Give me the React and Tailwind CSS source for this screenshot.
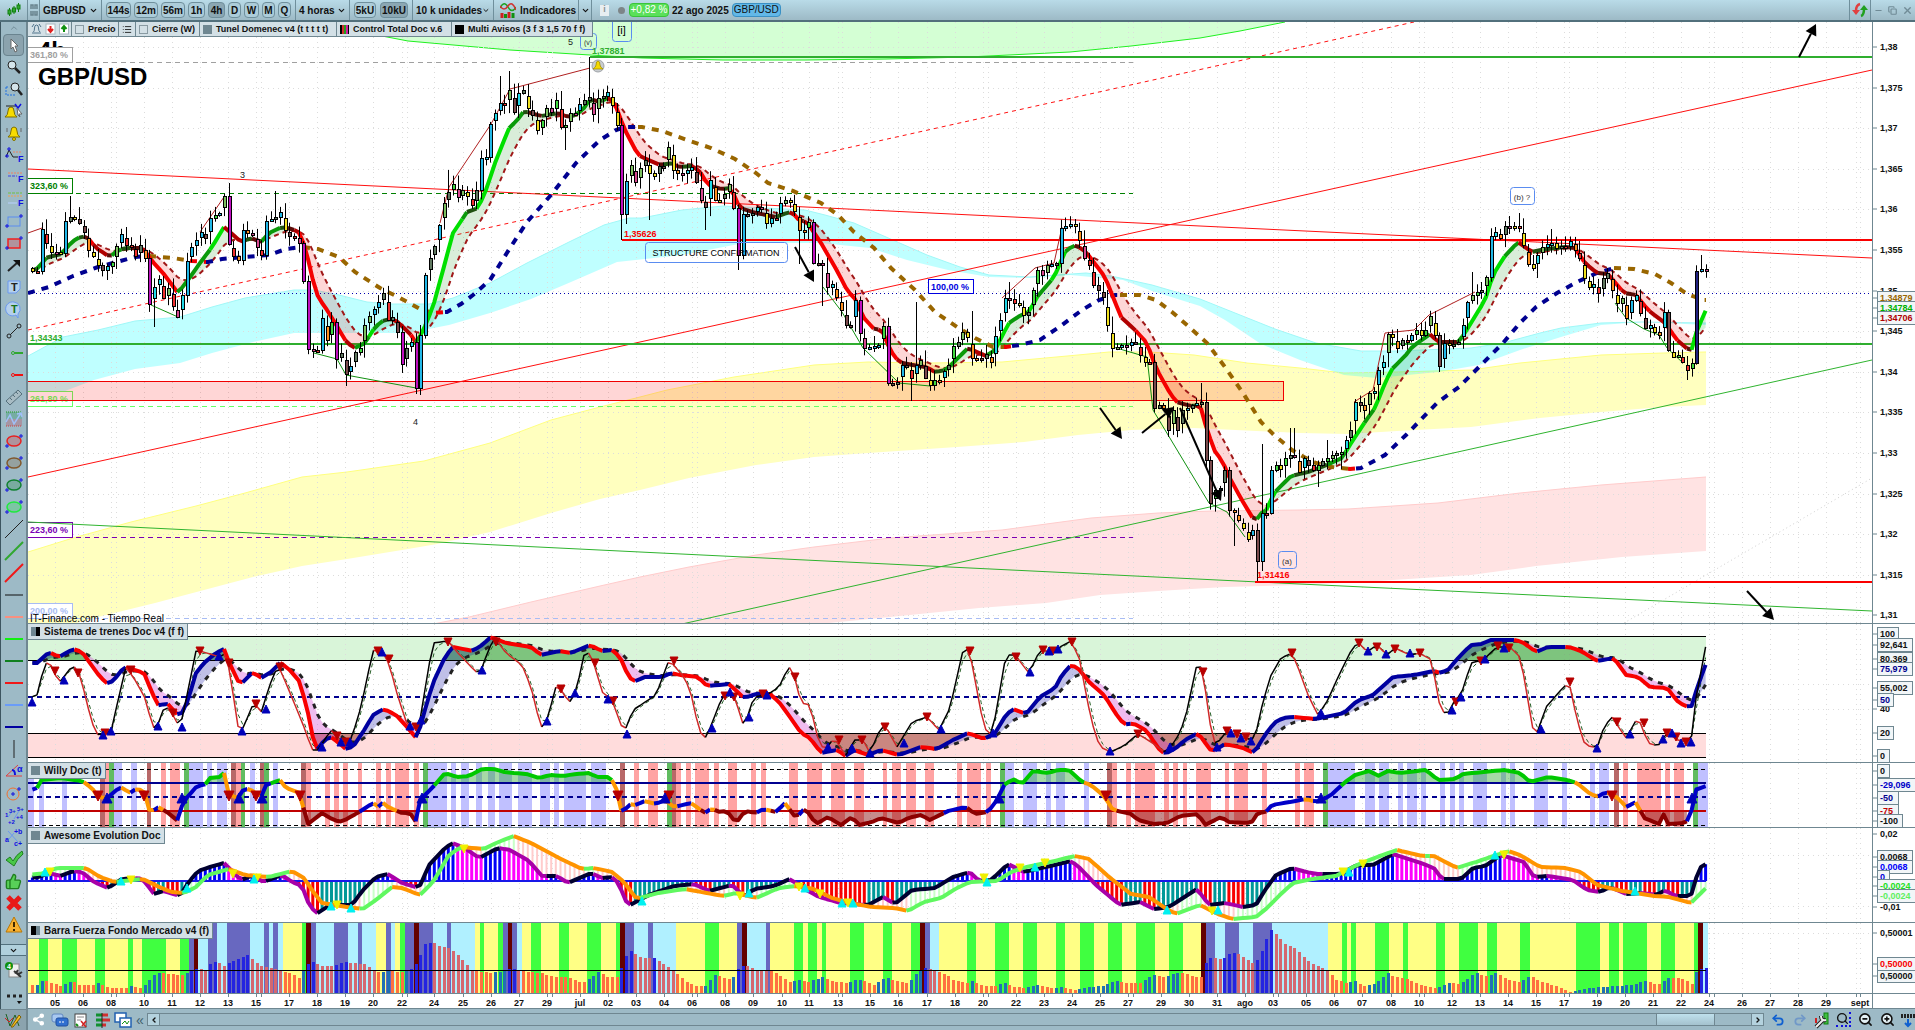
import { ChevronDown, ChevronLeft, ChevronRight, ChevronUp, List, Search, Share2, Undo2, Redo2, ZoomIn, ZoomOut, Check, ThumbsUp, Minus, Copy, X } from 'lucide-react'

// ---------- helpers ----------

const pts = s => s.trim().split(/\s+/).map(p => p.split(',').map(Number))

const STEP = 4.674
const BARS = Array.from({ length: 359 }, (_, i) => 32.35 + i * STEP)

function valueAt(series, x) {
  if (x <= series[0][0]) return series[0][1]
  for (let i = 1; i < series.length; i++) {
    const [x1, y1] = series[i]
    if (x <= x1) {
      const [x0, y0] = series[i - 1]
      return x1 === x0 ? y1 : y0 + ((y1 - y0) * (x - x0)) / (x1 - x0)
    }
  }
  return series[series.length - 1][1]
}

const sample = series => BARS.map(x => valueAt(series, x))

function ema(values, alpha) {
  let prev = values[0]
  return values.map(v => (prev = prev + alpha * (v - prev)))
}

function random(seed) {
  let s = seed
  return () => {
    s = (s * 16807) % 2147483647
    return s / 2147483647
  }
}

const f = n => Math.round(n * 10) / 10
const toPath = list => 'M' + list.map(([x, y]) => `${f(x)} ${f(y)}`).join('L')
const linePath = values => toPath(values.map((v, i) => [BARS[i], v]))

// Split a sampled line in runs of one colour
function runs(values, colorOf) {
  const out = []
  for (let i = 1; i < values.length; i++) {
    const color = colorOf(values[i] - values[i - 1], values[i], i)
    const last = out[out.length - 1]
    if (last && last.color === color) last.points.push([BARS[i], values[i]])
    else out.push({ color, points: [[BARS[i - 1], values[i - 1]], [BARS[i], values[i]]] })
  }
  return out
}

function between(a, b, test) {
  const out = []
  let top = []
  let bottom = []
  const flush = () => {
    if (top.length > 1) out.push(toPath([...top, ...bottom.reverse()]) + 'Z')
    top = []
    bottom = []
  }
  a.forEach((v, i) => {
    if (test(v, b[i])) {
      top.push([BARS[i], v])
      bottom.push([BARS[i], b[i]])
    } else flush()
  })
  flush()
  return out
}

// ---------- data ----------

const GRID_X = [55, 83, 111, 116, 144, 172, 200, 228, 256, 261, 289, 317, 345, 373, 402, 407, 434, 463, 491, 519, 547, 552, 580, 608, 636, 664, 692, 697, 725, 753, 782, 809, 838, 842, 870, 898, 927, 955, 983, 988, 1016, 1044, 1072, 1100, 1128, 1133, 1161, 1189, 1217, 1245, 1273, 1278, 1306, 1334, 1362, 1391, 1419, 1424, 1452, 1480, 1508, 1536, 1564, 1569, 1597, 1625, 1653, 1681, 1709, 1714, 1742, 1770, 1798, 1826, 1856, 1860]

const DATES = [[55, '05'], [83, '06'], [111, '08'], [144, '10'], [172, '11'], [200, '12'], [228, '13'], [256, '15'], [289, '17'], [317, '18'], [345, '19'], [373, '20'], [402, '22'], [434, '24'], [463, '25'], [491, '26'], [519, '27'], [547, '29'], [580, 'jul'], [608, '02'], [636, '03'], [664, '04'], [692, '06'], [725, '08'], [753, '09'], [782, '10'], [809, '11'], [838, '13'], [870, '15'], [898, '16'], [927, '17'], [955, '18'], [983, '20'], [1016, '22'], [1044, '23'], [1072, '24'], [1100, '25'], [1128, '27'], [1161, '29'], [1189, '30'], [1217, '31'], [1245, 'ago'], [1273, '03'], [1306, '05'], [1334, '06'], [1362, '07'], [1391, '08'], [1419, '10'], [1452, '12'], [1480, '13'], [1508, '14'], [1536, '15'], [1564, '17'], [1597, '19'], [1625, '20'], [1653, '21'], [1681, '22'], [1709, '24'], [1742, '26'], [1770, '27'], [1798, '28'], [1826, '29'], [1860, 'sept']]

const PRICES = ['1,38', '1,375', '1,37', '1,365', '1,36', '1,355', '1,35', '1,345', '1,34', '1,335', '1,33', '1,325', '1,32', '1,315', '1,31']

const AVG = sample(pts(`28,272 39,268 45,258 61,254 73,241 82,236 88,238 96,248 110,257 118,250 127,248 143,248 151,260 163,273 178,293 188,280 200,263 212,247 224,227 231,233 241,242 251,238 261,242 269,233 282,227 292,229 300,233 306,250 312,277 318,297 327,310 335,323 347,343 355,348 365,343 375,327 384,320 394,319 404,328 412,336 416,343 422,333 433,307 443,270 453,233 467,212 478,208 486,190 496,160 510,126 516,122 524,111 541,116 559,113 567,117 576,115 584,108 590,99 600,102 609,97 615,104 624,128 638,155 644,158 660,165 672,163 678,167 693,166 701,173 708,185 721,189 731,188 736,200 740,208 756,213 776,217 789,212 795,215 799,220 807,222 821,243 835,267 848,292 854,297 864,318 874,329 882,330 890,350 899,362 912,365 926,367 935,372 946,370 957,359 968,348 986,356 995,350 1001,338 1009,323 1021,315 1029,312 1037,297 1054,277 1066,250 1076,245 1086,252 1105,277 1113,297 1121,317 1135,330 1147,343 1156,368 1167,388 1176,402 1191,406 1200,405 1205,423 1214,450 1223,462 1227,473 1243,502 1255,522 1261,513 1265,513 1274,493 1291,476 1308,472 1324,466 1342,458 1353,440 1365,422 1375,408 1383,388 1391,370 1406,355 1412,347 1430,334 1438,342 1459,342 1471,323 1485,300 1493,275 1504,257 1518,242 1532,252 1546,249 1565,247 1575,248 1585,263 1597,273 1608,274 1624,293 1636,295 1648,310 1665,323 1677,340 1691,352 1697,330 1706,310`))
const AVG_SLOW = ema(AVG, 0.26)

const TREND = pts(`28,293 49,287 73,276 98,267 135,257 149,256 173,258 192,261 208,262 222,259 245,257 269,255 286,249 302,247 318,249 339,257 355,272 380,288 400,298 420,309 433,313 447,312 461,304 473,295 490,280 510,248 527,222 551,195 576,163 600,140 616,130 625,127 642,127 662,131 687,140 711,148 735,159 756,173 768,183 793,191 821,203 838,215 854,232 874,248 891,268 915,290 935,312 957,327 975,338 993,347 1006,347 1020,345 1040,340 1062,325 1082,310 1099,300 1115,295 1140,295 1156,300 1172,312 1188,326 1207,343 1225,367 1243,393 1261,422 1274,435 1292,450 1304,457 1316,463 1332,467 1350,469 1361,468 1385,455 1406,435 1438,402 1459,387 1483,363 1503,343 1520,323 1536,307 1557,293 1577,282 1597,273 1614,268 1634,269 1655,274 1671,283 1687,294 1704,300`)
const TREND_COLORS = [[28, 149, '#000090'], [149, 190, '#996600'], [190, 206, '#f00000'], [206, 303, '#000090'], [303, 436, '#996600'], [436, 445, '#f00000'], [445, 638, '#000090'], [638, 1004, '#996600'], [1004, 1012, '#f00000'], [1012, 1120, '#000090'], [1120, 1348, '#996600'], [1348, 1356, '#f00000'], [1356, 1614, '#000090'], [1614, 1706, '#996600']]

const BANDS = [
  {
    fill: '#ffe3e3', edge: '#ffcccc',
    upper: pts('433,624 469,617 531,602 600,586 640,577 689,567 756,555 814,547 890,538 1002,530 1091,518 1158,513 1212,511 1300,510 1348,509 1438,503 1520,493 1601,485 1706,477'),
    lower: pts('819,624 890,617 979,608 1046,603 1100,595 1158,591 1225,587 1300,585 1377,581 1471,575 1536,566 1622,557 1706,551'),
  },
  {
    fill: '#ffffbf', edge: '#ffff80',
    upper: pts('28,552 73,538 131,522 196,506 245,493 302,477 347,472 424,461 490,443 551,420 600,407 640,397 667,390 734,377 814,365 868,362 930,363 1002,362 1078,355 1109,352 1149,352 1194,355 1247,363 1300,368 1344,373 1397,372 1471,370 1520,363 1601,355 1663,353 1706,352'),
    lower: pts('28,624 73,624 98,617 155,603 204,590 253,577 302,566 347,559 408,549 437,544 490,532 551,513 600,499 640,490 689,478 756,465 814,457 868,453 957,447 1024,442 1078,435 1131,430 1194,428 1300,433 1348,434 1397,431 1471,427 1540,418 1601,412 1663,407 1706,405'),
  },
]
const CYAN = {
  upper: pts('28,356 63,337 98,330 135,321 180,317 212,307 245,298 294,290 314,290 339,295 367,302 392,304 429,304 453,298 490,283 527,263 567,243 604,225 629,218 642,218 682,210 723,206 764,208 805,210 825,215 854,223 886,237 927,255 960,267 989,275 1029,277 1086,273 1111,276 1152,285 1200,299 1275,329 1316,343 1361,351 1397,351 1471,348 1503,343 1540,333 1561,328 1601,323 1642,322 1706,323'),
  lower: pts('28,404 65,391 94,380 135,369 180,363 212,353 253,342 294,333 347,333 408,333 449,325 490,313 531,299 571,282 617,262 682,255 744,243 821,243 870,248 907,260 948,270 989,277 1029,278 1070,275 1123,280 1152,291 1200,306 1225,320 1261,344 1300,360 1344,375 1377,378 1438,372 1479,365 1520,350 1561,337 1601,325 1642,322 1706,325'),
}

const CLOSES = pts(`28,271 37,271 41,229 46,243 52,252 60,253 65,221 72,217 78,223 83,232 90,250 98,265 104,270 110,262 116,246 122,234 128,245 133,255 136,240 141,245 145,258 149,304 153,287 158,279 164,298 168,288 173,306 178,317 181,295 186,261 194,240 200,232 205,238 210,218 219,213 224,196 228,244 234,256 239,260 243,230 251,235 260,255 267,221 274,217 279,212 284,230 292,236 300,243 304,281 308,349 316,350 322,318 328,340 332,322 336,359 341,353 346,374 351,366 356,352 361,348 365,325 372,309 376,302 380,317 384,293 388,320 392,317 396,332 402,364 407,348 412,342 416,388 420,335 425,275 430,258 436,246 440,225 444,203 449,192 453,184 458,197 463,190 468,196 473,205 478,190 482,158 487,157 491,124 496,113 501,103 506,104 510,90 515,112 519,93 524,90 528,108 533,115 538,130 543,120 548,108 553,112 557,100 562,127 567,125 572,113 577,104 582,100 586,97 590,67 594,114 599,98 604,96 608,92 613,105 618,125 622,214 627,181 632,165 636,182 641,168 646,160 651,173 656,176 661,166 669,147 674,170 680,175 690,167 697,182 702,200 707,207 712,180 717,200 722,194 728,184 733,208 735,227 740,255 745,214 750,213 754,230 759,207 764,223 770,218 776,218 782,203 787,200 792,210 796,245 801,230 806,222 810,240 815,263 820,265 825,287 830,284 835,297 840,310 848,325 853,300 858,333 863,348 869,347 877,345 881,326 884,375 890,383 898,382 904,365 912,378 917,365 922,360 927,378 931,385 937,380 943,371 949,365 953,346 958,342 964,332 969,337 974,358 979,360 984,354 990,362 994,336 998,320 1003,298 1010,299 1016,303 1022,315 1026,312 1031,290 1036,270 1042,275 1048,265 1054,263 1058,243 1062,228 1068,224 1074,226 1078,240 1082,258 1088,265 1092,285 1098,290 1104,297 1109,325 1114,348 1120,345 1128,345 1133,342 1137,355 1142,355 1147,362 1152,408 1158,405 1163,408 1168,430 1173,410 1177,430 1182,410 1188,408 1193,405 1199,402 1203,460 1208,503 1214,490 1220,488 1223,470 1228,510 1232,512 1237,520 1242,528 1247,538 1252,530 1255,561 1259,484 1264,513 1270,470 1275,465 1280,469 1287,458 1292,455 1297,472 1303,458 1308,465 1312,470 1318,465 1325,458 1332,455 1340,452 1345,440 1349,430 1353,402 1360,405 1364,410 1368,393 1373,391 1377,370 1382,362 1386,334 1391,337 1396,347 1402,340 1408,340 1415,330 1421,335 1424,330 1429,316 1433,335 1438,366 1443,343 1450,345 1457,342 1462,325 1466,302 1471,295 1476,292 1481,290 1485,277 1490,236 1495,232 1500,238 1504,226 1512,226 1518,226 1523,245 1528,264 1532,268 1537,255 1542,247 1548,244 1553,243 1558,248 1563,246 1568,241 1573,250 1579,258 1584,278 1588,287 1593,284 1598,293 1603,278 1608,273 1612,290 1617,303 1622,298 1626,318 1631,300 1635,295 1640,313 1645,328 1650,325 1655,332 1659,335 1663,312 1667,350 1673,357 1678,355 1683,362 1687,370 1692,363 1697,271 1702,269 1706,270`)

// x, high, low of the bars with a long shadow
const WICKS = [[70, 196, 0], [228, 183, 0], [275, 191, 0], [153, 0, 327], [312, 0, 358], [347, 0, 386], [416, 0, 394], [421, 0, 395], [449, 170, 0], [502, 76, 0], [510, 71, 0], [567, 0, 150], [590, 57, 0], [622, 0, 240], [650, 0, 220], [707, 0, 230], [740, 0, 270], [797, 0, 264], [823, 0, 306], [913, 0, 401], [918, 302, 0], [970, 311, 0], [1007, 282, 0], [1073, 219, 0], [1199, 383, 0], [1232, 0, 546], [1255, 0, 581], [1260, 444, 0], [1292, 428, 0], [1325, 440, 0], [1317, 0, 487], [1343, 0, 469], [1438, 0, 372], [1471, 272, 0], [1509, 216, 0], [1518, 213, 0], [1551, 229, 0], [1688, 0, 380], [1700, 255, 0]]

const CANDLES = (() => {
  const rnd = random(77)
  const up = ['#22b8e8', '#40d840', '#607860', '#22d8e8', '#7cc060']
  const down = ['#f0e020', '#ff9020', '#d84890', '#7a4a4c', '#f03030']
  let prev = 268
  return BARS.map(x => {
    const near = CLOSES.find(p => Math.abs(p[0] - x) < 2.6)
    const close = near ? near[1] : valueAt(CLOSES, x)
    const open = prev
    prev = close
    let top = Math.min(open, close)
    let bottom = Math.max(open, close)
    const long = WICKS.find(w => Math.abs(w[0] - x) <= 2.4)
    const high = long && long[1] ? long[1] : top - 1 - rnd() * 9
    const low = long && long[2] ? long[2] : bottom + 1 + rnd() * 9
    const size = bottom - top
    let fill = (close < open ? up : down)[Math.floor(rnd() * 5)]
    if (size > 28) fill = close < open ? (x > 1690 ? '#202080' : '#22b8e8') : x < 900 ? '#c010c0' : '#7a4a4c'
    else if (size > 5) {
      // ordinary bars open with a gap against the last close
      if (close < open) bottom -= size * 0.35
      else top += size * 0.35
    }
    return { x: Math.round(x) + 0.5, top, bottom, fill, high, low }
  })
})()

const TRAIN = sample(pts(`28,663 37,663 49,652 59,657 73,649 82,652 90,663 100,677 108,684 114,680 124,667 135,670 144,673 153,695 159,706 167,703 175,712 180,717 188,700 196,673 204,663 216,653 224,649 228,660 240,685 253,672 261,678 271,672 280,663 288,668 300,682 308,713 314,743 318,750 324,740 331,737 339,743 347,750 355,744 363,732 373,715 384,709 396,715 408,728 417,739 424,713 433,683 445,657 453,647 473,651 482,645 491,637 506,643 531,647 541,655 559,651 571,653 590,645 602,651 612,650 620,657 627,673 633,682 645,677 662,677 671,673 680,675 698,677 707,686 718,685 729,684 744,698 756,694 770,694 779,702 790,717 801,733 810,738 821,753 837,750 846,756 854,750 868,755 881,750 899,755 921,747 937,749 953,740 968,733 984,739 995,733 1006,715 1013,709 1026,714 1040,697 1055,688 1062,675 1071,665 1078,668 1089,682 1104,695 1120,720 1127,725 1133,723 1147,731 1158,748 1165,754 1176,748 1185,740 1198,733 1212,752 1225,744 1243,748 1254,753 1265,735 1274,723 1283,718 1293,717 1316,719 1344,713 1357,701 1373,695 1393,677 1414,675 1434,671 1440,673 1448,670 1459,657 1471,645 1481,644 1491,640 1516,640 1524,643 1536,652 1548,647 1569,647 1581,651 1597,661 1614,658 1626,675 1638,677 1650,687 1667,688 1679,703 1691,708 1698,685 1706,664`))
const TRAIN_SLOW = ema(TRAIN, 0.27)

const FAST = sample(pts(`28,698 37,695 45,663 50,663 59,683 73,665 80,675 92,723 98,735 107,733 112,728 118,700 126,667 135,680 145,698 153,728 157,727 164,708 169,708 180,728 186,700 196,651 200,651 220,657 226,653 231,680 239,733 243,728 254,702 261,713 269,687 278,665 286,683 304,727 312,750 318,750 331,730 341,742 351,740 361,707 373,650 384,653 390,667 398,697 408,727 416,728 420,720 427,677 433,643 448,641 457,652 476,672 482,670 488,650 495,638 506,653 522,665 531,687 541,728 547,720 557,683 569,703 576,692 584,655 589,653 594,663 602,692 612,700 624,733 633,710 656,695 669,660 685,678 694,703 698,730 706,738 712,723 723,695 734,695 744,727 754,697 767,695 779,687 788,668 792,667 801,703 810,705 819,743 825,750 834,738 846,756 854,740 863,740 870,753 881,727 886,727 897,747 912,722 927,717 939,730 950,708 964,646 970,653 984,728 992,735 997,707 1006,655 1015,655 1029,673 1040,650 1055,652 1060,647 1071,641 1080,660 1087,700 1096,738 1102,748 1111,752 1125,745 1138,734 1154,744 1165,753 1176,740 1185,720 1198,659 1203,673 1212,737 1216,745 1227,731 1236,735 1250,740 1255,738 1261,710 1270,677 1281,658 1292,653 1299,670 1308,695 1318,715 1328,700 1338,677 1353,647 1359,643 1367,652 1377,645 1387,655 1395,648 1410,655 1419,653 1432,660 1438,700 1446,717 1455,700 1461,695 1471,663 1483,660 1497,647 1510,647 1520,657 1526,687 1532,727 1537,733 1546,707 1561,690 1569,682 1577,720 1585,745 1597,748 1604,727 1612,717 1626,738 1638,717 1648,743 1658,746 1667,732 1677,740 1691,742 1695,703 1706,645`))
const FAST_SLOW = ema(FAST, 0.7)

const TRAIN_SELL = pts('55,671 78,673 105,733 131,670 173,713 200,651 229,663 256,704 280,667 337,736 346,742 378,651 389,659 416,727 448,642 496,642 561,689 595,663 613,701 674,661 725,696 734,697 763,694 795,677 839,740 862,740 885,727 927,717 970,651 1016,657 1043,650 1053,651 1072,642 1138,734 1203,672 1227,731 1237,734 1246,737 1292,653 1359,643 1377,647 1395,649 1420,653 1456,702 1481,661 1498,646 1509,648 1570,682 1617,722 1644,723 1667,733 1676,737 1686,742')
const TRAIN_BUY = pts('32,702 64,680 103,735 111,731 158,726 182,727 219,656 242,731 266,709 322,747 341,742 350,742 382,652 410,726 421,720 482,670 547,721 575,693 608,699 627,734 712,728 730,692 749,717 767,695 828,747 852,748 870,753 904,743 941,729 993,733 1030,672 1049,651 1058,649 1110,751 1170,747 1217,747 1231,733 1241,738 1251,741 1321,713 1368,651 1386,654 1410,653 1452,710 1461,697 1485,659 1504,648 1541,729 1597,748 1630,734 1663,739 1672,733 1681,743 1691,742')

const WILLY = sample(pts(`28,791 37,788 40,780 61,778 82,781 92,788 98,797 107,798 120,787 131,793 137,788 145,793 150,813 158,807 167,812 178,821 183,802 198,785 204,786 210,778 220,777 224,773 229,795 239,798 244,788 251,790 261,797 266,785 280,780 286,788 300,793 304,810 308,824 322,813 330,818 339,822 345,820 359,812 373,803 378,807 382,802 388,807 402,813 410,813 416,822 420,800 433,787 445,773 457,777 469,776 482,769 494,769 504,772 514,773 527,774 539,778 550,775 563,776 576,774 590,773 596,777 610,777 616,787 622,814 629,804 636,805 645,801 656,804 665,800 674,807 691,803 705,813 712,808 718,812 727,811 736,823 745,811 756,813 763,809 776,812 785,803 796,818 805,808 816,824 828,817 841,825 852,817 859,825 872,822 881,818 899,823 908,818 921,815 930,820 948,811 966,807 975,814 988,812 997,800 1004,785 1013,779 1022,784 1033,771 1048,773 1058,770 1069,770 1082,782 1091,785 1104,796 1113,810 1131,814 1138,820 1154,824 1167,823 1180,816 1198,814 1205,825 1221,817 1229,822 1247,823 1254,821 1258,812 1265,813 1272,805 1290,802 1306,799 1316,802 1330,796 1344,783 1355,775 1369,771 1379,776 1387,771 1400,773 1426,770 1438,780 1455,779 1463,774 1504,770 1520,773 1530,782 1548,777 1567,780 1577,783 1589,793 1597,797 1606,792 1618,798 1626,807 1636,802 1644,818 1659,824 1663,813 1668,824 1683,823 1690,820 1695,790 1706,786`))
const WILLY_ZONES = {
  b: [[28, 34], [39, 44], [62, 67], [114, 122], [131, 137], [189, 203], [207, 212], [217, 227], [250, 255], [273, 278], [428, 447], [451, 456], [461, 469], [476, 482], [488, 495], [499, 512], [518, 532], [540, 550], [554, 559], [564, 586], [591, 606], [1005, 1014], [1023, 1037], [1046, 1051], [1056, 1065], [1084, 1089], [1328, 1355], [1365, 1375], [1379, 1389], [1398, 1403], [1407, 1417], [1421, 1426], [1440, 1445], [1450, 1455], [1459, 1464], [1473, 1487], [1501, 1506], [1510, 1515], [1534, 1548], [1562, 1567], [1590, 1595], [1599, 1609], [1698, 1708]],
  r: [[105, 109], [161, 166], [170, 180], [236, 241], [306, 311], [325, 330], [334, 339], [343, 348], [358, 362], [376, 381], [386, 391], [395, 409], [414, 419], [634, 639], [648, 658], [676, 681], [686, 691], [695, 709], [714, 719], [728, 737], [751, 756], [761, 766], [789, 798], [807, 822], [831, 845], [854, 864], [883, 887], [892, 901], [906, 916], [925, 934], [957, 962], [967, 981], [986, 991], [1112, 1117], [1126, 1131], [1135, 1155], [1164, 1169], [1173, 1178], [1183, 1187], [1196, 1211], [1225, 1229], [1234, 1248], [1262, 1267], [1295, 1300], [1304, 1314], [1623, 1628], [1637, 1661], [1665, 1670], [1674, 1684]],
  g: [[109, 114], [184, 189], [241, 245], [264, 269], [423, 428], [667, 672], [1000, 1005], [1323, 1328], [1693, 1698]],
  d: [[100, 105], [147, 151], [231, 236], [260, 264], [301, 306], [620, 625], [672, 676], [1107, 1112], [1614, 1619]],
}
const ZONE_FILL = { b: '#c0c0ff', r: '#ffa3a3', g: '#60bc60', d: '#b86868' }

const AO = sample(pts(`28,878 39,877 49,873 60,876 73,871 82,872 94,882 108,888 122,879 139,878 145,882 154,894 163,891 180,896 188,883 198,871 210,867 224,863 231,870 241,880 253,875 263,882 282,875 292,882 302,886 308,902 316,914 327,907 335,905 352,905 363,890 376,877 388,874 402,883 419,888 429,865 443,850 452,843 465,848 479,858 498,848 510,850 529,861 542,876 557,876 568,883 591,873 602,878 614,877 620,887 628,906 649,895 674,886 694,884 709,891 732,885 745,897 754,889 774,886 790,879 803,888 819,897 841,903 868,905 883,897 895,904 912,890 935,888 953,877 970,872 979,881 991,880 1008,864 1024,872 1046,867 1071,861 1080,868 1096,885 1120,905 1140,902 1154,909 1169,907 1197,889 1209,905 1225,903 1243,907 1256,905 1265,890 1276,875 1292,868 1306,872 1318,874 1340,874 1357,865 1373,865 1393,854 1418,862 1434,868 1442,879 1461,879 1473,868 1485,866 1501,855 1524,862 1534,877 1548,876 1573,880 1587,890 1600,892 1610,887 1626,894 1642,893 1657,895 1665,890 1675,896 1691,896 1699,868 1706,864`))
const AO_SIGNAL = sample(pts(`28,875 45,873 57,868 86,868 100,877 114,882 143,879 155,885 171,892 184,893 196,887 208,875 229,869 245,875 269,877 292,871 304,878 314,893 322,903 347,907 363,909 376,900 392,887 402,888 420,895 433,882 449,855 461,847 484,849 496,843 514,836 531,843 559,858 582,869 594,868 612,872 624,882 635,897 640,898 658,893 685,889 707,893 723,896 736,893 756,898 779,888 796,886 814,889 832,898 850,903 872,907 895,908 908,911 924,902 941,898 957,888 970,882 997,881 1011,872 1026,867 1046,863 1075,856 1089,859 1109,877 1131,894 1149,897 1165,908 1176,914 1200,905 1218,914 1232,919 1256,917 1267,908 1283,892 1293,883 1312,879 1336,876 1357,865 1377,857 1397,850 1422,856 1434,856 1457,868 1479,861 1508,851 1520,855 1540,867 1565,868 1581,872 1597,885 1622,891 1655,896 1669,897 1691,903 1706,888`))
const AO_DOWN = pts('50,872 131,880 233,874 257,878 337,905 464,849 740,896 799,887 820,894 848,903 984,878 1020,868 1045,863 1212,911 1343,872 1363,864 1504,855')
const AO_UP = pts('45,872 121,881 187,888 254,879 331,906 351,908 642,901 749,893 805,888 842,903 853,903 987,882 1035,867 1167,910 1218,910 1349,872 1495,855 1635,891')

const FORCE_BG = `28y 39g 48y 62g 77y 95g 105y 128g 133y 142g 166y 180g 189p 194m 198c 208p 217c 227p 250c 264p 269c 273p 278c 283y 302g 306m 311p 316c 334p 348c 358p 362c 376y 386p 391c 395y 400g 405p 414m 419p 433c 447p 451c 475y 480g 484y 498g 503p 508m 512p 517c 522y 531g 541y 559g 569y 587g 601y 616g 620m 625p 634c 648p 653c 676y 705g 719y 737p 742m 747c 766p 770y 794g 803y 808g 817y 822g 826y 850g 864y 883g 892y 911g 920m 925p 930c 939y 967g 976y 995g 1009y 1023g 1037y 1056g 1065y 1080g 1094y 1108g 1122y 1136g 1155y 1169g 1183y 1201m 1206p 1215c 1225p 1239c 1253p 1272c 1328y 1342g 1347y 1351g 1356y 1375g 1389y 1403g 1408y 1436g 1445y 1459g 1478y 1487g 1497y 1520g 1530y 1576g 1600y 1609g 1619y 1623g 1647y 1661g 1675y 1694g 1698m 1703c 1708e`
  .split(' ').map(s => [parseInt(s, 10), s.slice(-1)])
const FORCE_FILL = { y: '#ffff85', g: '#40ff40', c: '#b0f0ff', p: '#6868c0', m: '#640000' }
const FORCE = sample(pts(`31,985 36,986 40,981 46,981 52,983 60,986 66,984 72,981 80,985 95,985 98,983 105,986 112,988 126,988 132,986 140,988 147,984 152,976 160,972 170,974 183,975 192,970 197,969 206,970 210,964 216,962 225,966 232,961 240,958 248,955 255,962 262,966 270,968 280,970 292,974 300,979 306,965 313,962 322,966 334,966 342,962 365,964 376,972 390,971 400,972 410,970 418,962 424,944 432,942 440,947 450,948 460,957 472,970 490,973 503,971 512,968 520,971 540,973 555,977 567,977 583,983 590,978 598,972 608,977 618,977 624,960 629,951 633,952 640,957 647,959 653,957 662,963 673,970 685,981 695,986 705,986 715,975 725,978 732,980 740,966 748,966 757,970 770,970 778,975 792,983 797,979 808,982 822,977 832,981 846,983 858,979 864,981 875,985 885,977 895,981 908,983 918,972 925,968 934,970 945,974 955,981 968,983 972,981 985,986 995,986 1004,983 1015,987 1025,988 1037,985 1050,988 1062,987 1075,990 1090,987 1102,986 1115,981 1128,983 1140,983 1152,975 1165,977 1180,972 1195,977 1201,977 1206,962 1211,957 1222,960 1232,952 1240,955 1252,963 1257,960 1262,950 1267,937 1270,929 1276,934 1285,944 1295,948 1307,960 1317,966 1328,970 1335,979 1345,983 1354,981 1365,986 1375,984 1388,973 1395,977 1408,979 1420,985 1435,988 1450,983 1460,984 1475,973 1487,976 1495,973 1510,980 1520,982 1530,976 1540,981 1555,986 1570,992 1585,989 1600,987 1615,986 1630,985 1645,981 1658,985 1668,978 1680,978 1692,984 1696,972 1702,968 1706,968`))

// ---------- chart parts ----------

function Chart({ top, height, children, label }) {
  return (
    <svg viewBox={`28 ${top} 1887 ${height}`} className="block w-full" role="img" aria-label={label} fontFamily="Liberation Sans, Arial, sans-serif">
      {children}
      <line x1="1872.5" x2="1872.5" y1={top} y2={top + height} stroke="#6f8791" />
      <line x1="28" x2="1915" y1={top + height - 0.5} y2={top + height - 0.5} stroke="#6f8791" />
    </svg>
  )
}

function Grid({ top, bottom, rows = [] }) {
  return (
    <g stroke="#dcdcdc" strokeDasharray="1 4">
      {GRID_X.map(x => <line key={x} x1={x + 0.5} x2={x + 0.5} y1={top} y2={bottom} />)}
      {rows.map(y => <line key={y} x1="28" x2="1872" y1={y + 0.5} y2={y + 0.5} />)}
    </g>
  )
}

function AxisLabel({ y, text, color = '#111', boxed = false }) {
  const w = Math.round(text.length * 4.6 + 7)
  return (
    <g>
      <line x1="1872" x2="1877" y1={y} y2={y} stroke="#6f8791" />
      {boxed && <rect x="1877.5" y={Math.round(y) - 6.5} width={w} height="13" fill="#f2f6f8" stroke="#6f8791" />}
      <text x="1880" y={y + 3} fontSize="9" fontWeight="bold" fill={color}>{text}</text>
    </g>
  )
}

function Tri({ x, y, up, r = 4, fill }) {
  const d = up ? `M${x - r} ${y + r}L${x} ${y - r}L${x + r} ${y + r}Z` : `M${x - r} ${y - r}L${x} ${y + r}L${x + r} ${y - r}Z`
  return <path d={d} fill={fill} stroke={fill} />
}

function Arrow({ x1, y1, x2, y2 }) {
  const a = Math.atan2(y2 - y1, x2 - x1)
  const bx = x2 - 11 * Math.cos(a)
  const by = y2 - 11 * Math.sin(a)
  const ox = 6 * Math.sin(a)
  const oy = 6 * Math.cos(a)
  return (
    <g>
      <line x1={x1} y1={y1} x2={bx} y2={by} stroke="#000" strokeWidth="2" />
      <path d={`M${x2} ${y2}L${bx + ox} ${by - oy}L${bx - ox} ${by + oy}Z`} />
    </g>
  )
}

function Runs({ items, width, dash }) {
  return items.map((r, i) => (
    <path key={i} d={toPath(r.points)} fill="none" stroke={r.color} strokeWidth={width} strokeDasharray={dash} strokeLinejoin="round" />
  ))
}

function Note({ x, y, w, h, text, size = 9, color = '#333' }) {
  return (
    <g>
      <rect x={x + 0.5} y={y + 0.5} width={w} height={h} rx="3" fill="none" stroke="#5a8cf0" />
      <text x={x + w / 2} y={y + h / 2 + 4} fontSize={size} fill={color} textAnchor="middle">{text}</text>
    </g>
  )
}

const FIBS = [
  [62, '361,80 %', '#a0a0a0'],
  [193, '323,60 %', '#008000'],
  [406, '261,80 %', '#66ff66'],
  [537, '223,60 %', '#7a00b4'],
  [618, '200,00 %', '#a8bcf4'],
]

function avgColor(d) {
  if (d < -7) return '#00e000'
  if (d < -2) return '#0a9a0a'
  if (d < 0) return '#1f5210'
  if (d < 2) return '#5a0c08'
  if (d < 5) return '#b00000'
  return '#f40000'
}

function PriceChart() {
  return (
    <Chart top={22} height={602} label="GBP/USD 4 horas">
      <rect x="28" y="22" width="1887" height="602" fill="#fff" />
      <path d="M340 22L382 36L408 41L510 50L590 55L642 58L723 60L805 60L886 59L968 57L1070 52L1131 46L1200 38L1240 31L1285 22Z" fill="#d4ffd4" />
      <path d="M340 22L382 36L408 41L510 50L590 55L642 58L723 60L805 60L886 59L968 57L1070 52L1131 46L1200 38L1240 31L1285 22" fill="none" stroke="#20f020" />
      {BANDS.map(b => (
        <g key={b.fill}>
          <path d={toPath([...b.upper, ...[...b.lower].reverse()]) + 'Z'} fill={b.fill} />
          <path d={toPath(b.upper)} fill="none" stroke={b.edge} />
        </g>
      ))}
      <path d={toPath([...CYAN.upper, ...[...CYAN.lower].reverse()]) + 'Z'} fill="#00ffff" fillOpacity="0.25" />
      <path d={toPath(CYAN.upper)} fill="none" stroke="#a0f8f8" />
      <Grid top={22} bottom={624} rows={PRICES.map((_, i) => Math.round(47 + i * 40.6))} />

      <text x="38" y="59" fontSize="24" fontWeight="bold">4h</text>
      <text x="38" y="85" fontSize="24" fontWeight="bold">GBP/USD</text>
      {FIBS.map(([y, text, color]) => (
        <g key={text}>
          <line x1="76" x2="1133" y1={y + 0.5} y2={y + 0.5} stroke={color} strokeDasharray="5 4" />
          <rect x="20.5" y={y - 14.5} width="52" height="15" fill="#fff" stroke={color} />
          <text x="30" y={y - 4} fontSize="9" fontWeight="bold" fill={color}>{text}</text>
        </g>
      ))}

      {/* support zone */}
      <rect x="20" y="381.5" width="1263.5" height="19" fill="#ff0000" fillOpacity="0.16" stroke="#f00000" />

      {/* trend lines */}
      <g fill="none" stroke="#ff1010">
        <path d="M28 169L640 199L1200 226L1872 258" />
        <path d="M28 330L640 194L1414 22" strokeDasharray="4 4" />
        <path d="M28 477L640 342L1200 218L1872 70" />
      </g>
      <g fill="none" stroke="#2fb42f">
        <path d="M28 522L640 552L1300 584L1872 611" />
        <path d="M682 624L1300 487L1872 360" />
      </g>
      <path d="M1624 623L1872 478" stroke="#d0d0d0" strokeDasharray="1 3" />
      <line x1="28" x2="1872" y1="293.5" y2="293.5" stroke="#0000b0" strokeDasharray="1 3" />
      <line x1="590" x2="1872" y1="57" y2="57" stroke="#2fae2f" strokeWidth="2" />
      <line x1="28" x2="1872" y1="344" y2="344" stroke="#2fae2f" strokeWidth="2" />
      <line x1="622" x2="1872" y1="240" y2="240" stroke="#fa0000" strokeWidth="2" />
      <line x1="1255" x2="1872" y1="582" y2="582" stroke="#fa0000" strokeWidth="2" />

      {between(AVG, AVG_SLOW, (a, b) => a <= b).map(d => <path key={d} d={d} fill="#008800" fillOpacity="0.15" />)}
      {between(AVG, AVG_SLOW, (a, b) => a > b).map(d => <path key={d} d={d} fill="#f00000" fillOpacity="0.16" />)}
      <path d={linePath(AVG_SLOW)} fill="none" stroke="#a01818" strokeWidth="2" strokeDasharray="5 4" />
      {TREND_COLORS.map(([from, to, color]) => {
        const inner = TREND.filter(p => p[0] > from && p[0] < to)
        const d = toPath([[from, valueAt(TREND, from)], ...inner, [to, valueAt(TREND, to)]])
        return <path key={from} d={d} fill="none" stroke={color} strokeWidth="4" strokeDasharray="7 7" />
      })}

      {/* zigzags */}
      <path d="M28 233L42 228M200 232L224 197M440 223L449 187L491 124L510 89L590 68M1002 298L1035 268L1054 263L1062 227M1354 402L1373 390L1385 333L1414 330L1429 315L1475 292" fill="none" stroke="#b02020" />
      <path d="M151 305L178 317M314 353L337 359L346 375L416 388M823 287L842 312L863 348L899 383L930 386M1113 347L1147 357L1153 410L1209 503L1227 512L1245 537M1615 303L1626 318L1644 329L1659 335L1667 348L1683 363" fill="none" stroke="#109010" />

      <Runs items={runs(AVG, avgColor)} width={4} />

      {CANDLES.map(c => (
        <g key={c.x}>
          <line x1={c.x} x2={c.x} y1={f(c.high)} y2={f(c.low)} stroke="#000" />
          <rect x={c.x - 1} y={Math.round(c.top) + 0.5} width="3" height={Math.max(2, Math.round(c.bottom - c.top))} fill={c.fill} stroke="#000" />
        </g>
      ))}

      <Arrow x1={1799} y1={57} x2={1816} y2={24} />
      <Arrow x1={1747} y1={591} x2={1774} y2={620} />
      <Arrow x1={795} y1={247} x2={814} y2={282} />
      <Arrow x1={1100} y1={408} x2={1122} y2={439} />
      <Arrow x1={1142} y1={433} x2={1174} y2={407} />
      <Arrow x1={1180} y1={408} x2={1221} y2={501} />

      <Note x={645} y={242} w={142} h={20} text="STRUCTURE CONFIRMATION" color="#000" />
      <Note x={612} y={18} w={19} h={23} text="[i]" size={11} color="#000" />
      <Note x={580} y={33} w={16} h={16} text="(v)" size={7} />
      <Note x={1510} y={187} w={24} h={17} text="(b) ?" size={8} />
      <Note x={1278} y={551} w={18} h={17} text="(a)" size={8} />
      <rect x="928.5" y="279.5" width="45" height="14" fill="#fff" stroke="#0000e0" />
      <text x="931" y="290" fontSize="9" fontWeight="bold" fill="#0000e0">100,00 %</text>
      <g fontSize="9" fill="#222">
        <text x="240" y="178">3</text>
        <text x="413" y="425">4</text>
        <text x="568" y="45">5</text>
      </g>
      <g fontSize="9" fontWeight="bold">
        <text x="592" y="54" fill="#2fae2f">1,37881</text>
        <text x="30" y="341" fill="#2fae2f">1,34343</text>
        <text x="624" y="237" fill="#fa0000">1,35626</text>
        <text x="1257" y="578" fill="#fa0000">1,31416</text>
      </g>
      <circle cx="598" cy="66" r="6" fill="#c8ccd0" stroke="#a0a4a8" />
      <path d="M593 69Q596 67 596 65Q596 61 598 61Q600 61 600 65Q600 67 603 69Z" fill="#f4d800" stroke="#9a8400" strokeWidth="0.7" />
      <text x="30" y="622" fontSize="10" fill="#000">IT-Finance.com - Tiempo Real</text>

      <rect x="1873" y="22" width="42" height="602" fill="#fff" />
      {PRICES.map((p, i) => <AxisLabel key={p} y={Math.round(47 + i * 40.6)} text={p} />)}
      <AxisLabel y={298} text="1,34879" color="#996600" boxed />
      <AxisLabel y={308} text="1,34784" color="#00b000" boxed />
      <AxisLabel y={318} text="1,34706" color="#b00000" boxed />
    </Chart>
  )
}

function TrainChart() {
  const high = TRAIN.map(v => Math.min(v, 660))
  const low = TRAIN.map(v => Math.max(v, 733))
  return (
    <Chart top={624} height={139} label="Sistema de trenes Doc v4">
      <rect x="28" y="624" width="1887" height="139" fill="#fff" />
      <rect x="28" y="636" width="1678" height="24" fill="#d9f5d9" />
      <rect x="28" y="733" width="1678" height="24" fill="#ffdcdc" />
      <Grid top={624} bottom={763} rows={[684, 709]} />
      {between(high, high.map(() => 660), (a, b) => a <= b).map(d => <path key={d} d={d} fill="#008000" fillOpacity="0.42" />)}
      {between(low, low.map(() => 733), (a, b) => a >= b).map(d => <path key={d} d={d} fill="#801000" fillOpacity="0.42" />)}
      {between(TRAIN, TRAIN_SLOW, (a, b) => a <= b).map(d => <path key={d} d={d} fill="#0000a0" fillOpacity="0.25" />)}
      {between(TRAIN, TRAIN_SLOW, (a, b) => a > b).map(d => <path key={d} d={d} fill="#d040d0" fillOpacity="0.35" />)}
      <path d="M28 636.5H1706M28 660.5H1706M28 733.5H1706M28 757.5H1706" stroke="#000" />
      <path d="M28 697H1706" stroke="#000090" strokeWidth="2" strokeDasharray="5 4" />
      <path d={linePath(FAST_SLOW)} fill="none" stroke="#286028" strokeDasharray="4 3" />
      <path d={linePath(TRAIN_SLOW)} fill="none" stroke="#222" strokeWidth="3" strokeDasharray="5 6" />
      <Runs items={runs(TRAIN, d => (d <= 0.02 ? '#0000a0' : '#f80000'))} width={4} />
      <Runs items={runs(FAST, d => (d <= 0 ? '#000000' : '#d02828'))} width={1.5} />
      {TRAIN_SELL.map(([x, y]) => <Tri key={x} x={x} y={y} fill="#b80000" />)}
      {TRAIN_BUY.map(([x, y]) => <Tri key={x} x={x} y={y} up fill="#0000b8" />)}
      <AxisLabel y={634} text="100" boxed />
      <AxisLabel y={659} text="80,369" boxed />
      <AxisLabel y={645} text="92,641" boxed />
      <AxisLabel y={669} text="75,979" color="#000090" boxed />
      <AxisLabel y={709} text="40" />
      <AxisLabel y={688} text="55,002" boxed />
      <AxisLabel y={700} text="50" color="#000090" boxed />
      <AxisLabel y={733} text="20" boxed />
      <AxisLabel y={756} text="0" boxed />
    </Chart>
  )
}

function WillyChart() {
  const color = (d, v) => (v < 783 ? '#00c800' : v > 811 ? '#8c0000' : d <= 0.2 ? '#0000c8' : '#ff9800')
  return (
    <Chart top={763} height={65} label="Willy Doc">
      <rect x="28" y="763" width="1887" height="65" fill="#fff" />
      <Grid top={763} bottom={828} />
      {Object.entries(WILLY_ZONES).map(([k, list]) => list.map(([a, b]) => (
        <rect key={k + a} x={a} y="763" width={b - a} height="65" fill={ZONE_FILL[k]} />
      )))}
      {between(WILLY, WILLY.map(() => 783), (a, b) => a < b).map(d => <path key={d} d={d} fill="#20a020" fillOpacity="0.4" />)}
      {between(WILLY, WILLY.map(() => 811), (a, b) => a > b).map(d => <path key={d} d={d} fill="#800000" fillOpacity="0.45" />)}
      <path d="M28 769.5H1706M28 825.5H1706" stroke="#000" strokeDasharray="4 3" />
      <path d="M28 783H1706" stroke="#000090" strokeWidth="2" />
      <path d="M28 797H1706" stroke="#000090" strokeWidth="2" strokeDasharray="5 4" />
      <path d="M28 811H1706" stroke="#c00000" strokeWidth="2" />
      <Runs items={runs(WILLY, color)} width={4} />
      {[98, 144, 229, 256, 300, 618, 669, 1106, 1612].map(x => <Tri key={x} x={x} y={796} r={5} fill="#b80000" />)}
      {[107, 182, 239, 262, 422, 665, 999, 1321, 1692].map(x => <Tri key={x} x={x} y={798} r={5} up fill="#0000b8" />)}
      <AxisLabel y={771} text="0" boxed />
      <AxisLabel y={785} text="-29,096" color="#0000c8" boxed />
      <AxisLabel y={798} text="-50" color="#000090" boxed />
      <AxisLabel y={811} text="-75" color="#c00000" boxed />
      <AxisLabel y={821} text="-100" boxed />
    </Chart>
  )
}

function AwesomeChart() {
  const barColor = (v, d) => (v < 881 ? (d <= 0 ? '#0000f8' : '#ff00ff') : d <= 0 ? '#009898' : '#f80000')
  return (
    <Chart top={828} height={95} label="Awesome Evolution Doc">
      <rect x="28" y="828" width="1887" height="95" fill="#fff" />
      <Grid top={828} bottom={923} rows={[855, 906]} />
      {BARS.map((x, i) => {
        const v = AO[i]
        const s = AO_SIGNAL[i]
        const rising = s <= AO_SIGNAL[Math.max(0, i - 1)]
        return (
          <g key={x}>
            <line x1={f(x)} x2={f(x)} y1={f(v)} y2={f(s)} stroke={rising ? '#c8ffc8' : '#ffcccc'} strokeWidth="2" />
            <line x1={f(x)} x2={f(x)} y1="881" y2={f(v)} stroke={barColor(v, v - AO[Math.max(0, i - 1)])} strokeWidth="3" />
          </g>
        )
      })}
      <path d="M28 881H1706" stroke="#1818e8" strokeWidth="2" />
      <Runs items={runs(AO, d => (d <= 0 ? '#000030' : '#a800a8'))} width={4} />
      <Runs items={runs(AO_SIGNAL, d => (d <= 0 ? '#60f860' : '#ff9400'))} width={4} />
      {AO_DOWN.map(([x, y]) => <Tri key={x} x={x} y={y} fill="#f0f000" />)}
      {AO_UP.map(([x, y]) => <Tri key={x} x={x} y={y} up fill="#00f0f0" />)}
      <AxisLabel y={834} text="0,02" />
      <AxisLabel y={857} text="0,0068" boxed />
      <AxisLabel y={867} text="0,0068" color="#0000f8" boxed />
      <AxisLabel y={877} text="0" color="#0000d8" boxed />
      <AxisLabel y={886} text="-0,0024" color="#20e020" boxed />
      <AxisLabel y={896} text="-0,0024" color="#60f060" boxed />
      <AxisLabel y={907} text="-0,01" />
    </Chart>
  )
}

function ForceChart() {
  return (
    <Chart top={923} height={71} label="Barra Fuerza Fondo Mercado v4">
      <rect x="28" y="923" width="1887" height="71" fill="#fff" />
      <Grid top={923} bottom={994} rows={[933]} />
      {FORCE_BG.slice(0, -1).map(([x, k], i) => (
        <rect key={x} x={x} y="923" width={FORCE_BG[i + 1][0] - x} height="71" fill={FORCE_FILL[k]} />
      ))}
      {BARS.map((x, i) => {
        const v = Math.round(FORCE[i])
        const rising = FORCE[i] < FORCE[Math.max(0, i - 1)] - 0.2
        const fill = v < 971 ? (rising ? '#2424e0' : '#d46870') : rising ? '#2070b4' : '#ff7040'
        return <rect key={x} x={Math.round(x) - 1} y={v} width="3" height={994 - v} fill={fill} />
      })}
      <path d="M28 970.5H1706" stroke="#000" />
      <AxisLabel y={933} text="0,50001" />
      <AxisLabel y={976} text="0,50000" boxed />
      <AxisLabel y={964} text="0,50000" color="#f80000" boxed />
    </Chart>
  )
}

function TimeAxis() {
  return (
    <Chart top={994} height={15} label="Fechas">
      <rect x="28" y="994" width="1887" height="15" fill="#fff" />
      {GRID_X.map(x => <line key={x} x1={x + 0.5} x2={x + 0.5} y1="994" y2="997" stroke="#6f8791" />)}
      {DATES.map(([x, t]) => (
        <text key={x} x={x} y="1006" fontSize="9" fontWeight="bold" textAnchor="middle" fill="#111">{t}</text>
      ))}
    </Chart>
  )
}

// ---------- toolbar ----------

const Sep = () => <div className="h-full w-px shrink-0 bg-[#6f8f9c]" />

function TimeButton({ children, active, className }) {
  return (
    <button type="button" className={`h-[16px] shrink-0 rounded-sm border border-[#6f8f9c] text-center ${active ? 'bg-[#8ba7b3]' : 'bg-[#acccd9]'} ${className}`}>
      {children}
    </button>
  )
}

function Picker({ children, className }) {
  return (
    <button type="button" className={`flex h-full shrink-0 items-center justify-between whitespace-nowrap ${className}`}>
      {children}
      <ChevronDown size={9} strokeWidth={3} />
    </button>
  )
}

function TopBar() {
  return (
    <header className="flex h-[22px] shrink-0 items-center overflow-hidden border-b-2 border-[#52707c] bg-gradient-to-b from-[#b9dbe8] to-[#9dbac6] text-[10px] font-bold">
      <div className="flex w-[27px] shrink-0 justify-center">
        <svg width="14" height="14" stroke="#108010" fill="#30a830">
          <path d="M2.5 5V13M7 3V11M11.5 0V9" /><rect x="1" y="7" width="3" height="4" /><rect x="5.5" y="5" width="3" height="4" /><rect x="10" y="2" width="3" height="4" />
        </svg>
      </div>
      <Sep />
      <div className="flex w-[11px] shrink-0 justify-center">
        <svg width="8" height="14" fill="none" stroke="#6a848f" strokeWidth="1.5"><path d="M1 6V2H3V6M5 6V2H7V6M1 8V12H3V8M5 8V12H7V8" /></svg>
      </div>
      <Sep />
      <Picker className="w-[61px] px-[3px]">GBPUSD</Picker>
      <Sep />
      <div className="flex shrink-0 items-center gap-[3px] px-1">
        <TimeButton className="w-[25px]">144s</TimeButton>
        <TimeButton className="w-[24px]">12m</TimeButton>
        <TimeButton className="w-[24px]">56m</TimeButton>
        <TimeButton className="w-[17px]">1h</TimeButton>
        <TimeButton className="w-[17px]" active>4h</TimeButton>
        <TimeButton className="w-[13px]">D</TimeButton>
        <TimeButton className="w-[15px]">W</TimeButton>
        <TimeButton className="w-[13px]">M</TimeButton>
        <TimeButton className="w-[13px]">Q</TimeButton>
      </div>
      <Sep />
      <Picker className="w-[53px] px-[3px]">4 horas</Picker>
      <Sep />
      <div className="flex shrink-0 items-center gap-1 px-1">
        <TimeButton className="w-[22px]">5kU</TimeButton>
        <TimeButton className="w-[28px]" active>10kU</TimeButton>
      </div>
      <Sep />
      <Picker className="w-[80px] px-[3px]">10 k unidades</Picker>
      <Sep />
      <button type="button" className="flex h-full w-[84px] shrink-0 items-center gap-1 pl-[6px]">
        <svg width="16" height="16" fill="none" strokeWidth="1.5" className="shrink-0">
          <path d="M0 6Q4 -2 8 5T16 5" stroke="#20a020" /><path d="M0 4Q4 10 8 4T16 8" stroke="#d03030" />
          <path d="M2 16V11M9 16V10" stroke="#d02020" strokeWidth="3" /><path d="M5.5 16V12M13 16V11" stroke="#109010" strokeWidth="3" />
        </svg>
        Indicadores
      </button>
      <Sep />
      <button type="button" aria-label="Más indicadores" className="flex h-full w-[12px] shrink-0 items-center justify-center"><ChevronDown size={9} strokeWidth={3} /></button>
      <Sep />
      <span className="ml-2 flex h-[11px] w-[9px] shrink-0 items-center justify-center bg-[#e8eef1] text-[9px] text-[#8a9499]">i</span>
      <span className="ml-[9px] h-[7px] w-[7px] shrink-0 rounded-full bg-[#7d8588]" />
      <span className="ml-1 w-[40px] shrink-0 whitespace-nowrap rounded-sm border border-[#3ac43a] bg-[#5ae05a] text-center font-normal leading-3 text-white">+0,82 %</span>
      <span className="mx-[3px] shrink-0 text-center">22 ago 2025</span>
      <span className="shrink-0 whitespace-nowrap rounded-sm border border-[#3a90c4] bg-[#62b8e8] px-px font-normal leading-3">GBP/USD</span>
      <div className="grow" />
      <Sep />
      <button type="button" aria-label="Recargar" className="flex w-[20px] shrink-0 justify-center">
        <svg width="16" height="16" fill="none" strokeWidth="2.5"><path d="M8 2Q4 3 4 9" stroke="#e04040" /><path d="M0 8H8L4 13Z" fill="#e04040" /><path d="M9 14Q12 13 12 7" stroke="#20a020" /><path d="M8 8H16L12 3Z" fill="#20a020" /></svg>
      </button>
      <Sep />
      <div className="flex w-[44px] shrink-0 items-center justify-around text-[#708b96]">
        <button type="button" aria-label="Minimizar"><Minus size={9} strokeWidth={3} /></button>
        <button type="button" aria-label="Restaurar"><Copy size={9} strokeWidth={3} /></button>
        <button type="button" aria-label="Cerrar"><X size={11} strokeWidth={3} /></button>
      </div>
    </header>
  )
}

function LegendItem({ children, swatch, className = '' }) {
  return (
    <div className={`flex h-full items-center gap-1 whitespace-nowrap border-r border-[#6f8791] px-[3px] ${className}`}>
      {swatch}
      {children}
    </div>
  )
}

const Box = ({ className }) => <span className={`h-[9px] w-[9px] shrink-0 ${className}`} />

function Legend() {
  return (
    <div className="absolute left-0 top-0 flex h-[15px] border-b border-[#6f8791] bg-[#d3e0e6] text-[9px] font-bold leading-none">
      <LegendItem className="w-[44px]">
        <svg width="38" height="12" fill="none" className="shrink-0">
          <path d="M1 10H10M2.5 9Q3.5 8 3.5 5Q3.5 2 5.5 2Q7.5 2 7.5 5Q7.5 8 9 9M1 4L3 1M8 1L10 4" stroke="#50748c" />
          <rect x="15" y="1" width="9" height="10" fill="#fff" stroke="#a8b8c0" /><path d="M19.5 3V9M17 6L19.5 9L22 6" stroke="#e02020" strokeWidth="2" />
          <rect x="28.5" y="1" width="9" height="10" fill="#fff" stroke="#a8b8c0" /><path d="M33 9V3M30.5 6L33 3L35.5 6" stroke="#109010" strokeWidth="2" />
        </svg>
      </LegendItem>
      <LegendItem className="w-[47px]" swatch={<Box className="border border-[#8a9ba3]" />}>Precio</LegendItem>
      <LegendItem className="w-[17px]"><List size={11} /></LegendItem>
      <LegendItem className="w-[64px]" swatch={<Box className="border border-[#8a9ba3]" />}>Cierre (W)</LegendItem>
      <LegendItem className="w-[137px]" swatch={<Box className="bg-[#6f8791]" />}>Tunel Domenec v4 (t t t t t)</LegendItem>
      <LegendItem
        className="w-[115px]"
        swatch={<span className="flex h-[9px] w-[9px] shrink-0"><i className="w-[2px] bg-black" /><i className="w-[2px] bg-[#d03030]" /><i className="w-[2px] bg-[#20a020]" /><i className="w-[2px] bg-[#d020a0]" /><i className="w-px bg-black" /></span>}
      >
        Control Total Doc v.6
      </LegendItem>
      <LegendItem className="w-[141px]" swatch={<Box className="bg-black" />}>Multi Avisos (3 f 3 1,5 70 f f)</LegendItem>
    </div>
  )
}

function PanelTitle({ children, swatch }) {
  return (
    <div className="absolute left-0 top-0 flex h-[16px] items-center gap-1 whitespace-nowrap border-b border-r border-[#6f8791] bg-[#d3e0e6] px-[3px] text-[10px] font-bold">
      {swatch}
      <span>{children}</span>
    </div>
  )
}

// ---------- left tool strip ----------

const plus = (x, y) => `M${x - 2} ${y}H${x + 2}M${x} ${y - 2}V${y + 2}`
const Ico = ({ children }) => <svg width="20" height="20" viewBox="0 0 20 20" fill="none" stroke="#222" className="shrink-0">{children}</svg>
const BELL = 'M4 14Q7 12 7 8Q7 4 10 4Q13 4 13 8Q13 12 16 14Z'
const Letter = ({ x, y, fill = '#1010e0', size = 9, children }) => <text x={x} y={y} fontSize={size} fontWeight="bold" fill={fill} stroke="none">{children}</text>
const Ellipse = ({ color }) => <Ico><ellipse cx="10" cy="10" rx="7" ry="5" stroke={color} fill={color} fillOpacity="0.25" strokeWidth="1.5" /><path d={plus(17, 5) + plus(3, 15)} stroke="#1010e0" /></Ico>
const Slash = ({ color, width }) => <Ico><path d="M1 19L19 1" stroke={color} strokeWidth={width} /></Ico>
const Flat = ({ color, width = 2 }) => <Ico><path d="M1 10H19" stroke={color} strokeWidth={width} /></Ico>

const TOOLS = [
  ['Zoom', <Ico><circle cx="8" cy="8" r="4" fill="#d4e4ea" /><path d="M11 11L16 16" strokeWidth="2.5" /></Ico>],
  ['Zoom de zona', <Ico><path d="M2 8V16H11M2 8H5" stroke="#2070e0" strokeDasharray="2 1" /><circle cx="11" cy="8" r="4" fill="#d4e4ea" /><path d="M14 11L18 16" strokeWidth="2.5" /></Ico>],
  ['Alerta en objeto', <Ico><path d={BELL} fill="#f8dc00" stroke="#807000" transform="translate(-3 2)" /><path d="M2 5H12" /><path d="M11 3L14 7L17 3" stroke="#1010e0" strokeWidth="1.5" /><path d="M13 7L18 13L15 13L16 16L14 14Z" fill="#fff" stroke="#666" /></Ico>],
  ['Alertas', <Ico><path d={BELL} fill="#f8dc00" stroke="#807000" /><circle cx="10" cy="16" r="1.5" fill="#f8dc00" stroke="#807000" /><path d="M3 5V9M17 5V9" stroke="#666" /></Ico>],
  ['Extensión', <Ico><path d="M2 12L5 5L9 12H14" /><path d={plus(5, 4) + plus(3, 11)} stroke="#1010e0" /><path d="M9 7H18" stroke="#f08060" strokeDasharray="2 1" /><Letter x="14" y="17">F</Letter></Ico>],
  ['Fibonacci', <Ico><path d="M4 6H18" stroke="#f08060" strokeDasharray="2 1" /><path d="M4 9H13" stroke="#4040e0" strokeDasharray="3 1" /><Letter x="14" y="15">F</Letter></Ico>],
  ['Retrocesos', <Ico><path d="M4 4H18" stroke="#70c040" strokeDasharray="3 1" /><path d="M4 7H18" stroke="#f0a050" strokeDasharray="2 1" /><path d="M4 14H13" stroke="#b8d0ff" /><Letter x="14" y="17">F</Letter></Ico>],
  ['Rectángulo', <Ico><rect x="4" y="6" width="12" height="9" stroke="#5a8cf0" /><path d={plus(17, 5) + plus(3, 15)} stroke="#1010e0" /></Ico>],
  ['Rectángulo rojo', <Ico><rect x="4" y="6" width="12" height="9" stroke="#f02020" fill="#f02020" fillOpacity="0.25" strokeWidth="1.5" /><path d={plus(17, 5) + plus(3, 15)} stroke="#1010e0" /></Ico>],
  ['Flecha', <Ico><path d="M4 16L14 7" strokeWidth="2" /><path d="M9 5H16V12Z" fill="#111" stroke="none" /></Ico>],
  ['Texto', <Ico><path d="M4 4H16V12L12 16H4Z" fill="#b4d0ec" stroke="#6a98f0" /><Letter x="7" y="14" size={11} fill="#222">T</Letter></Ico>],
  ['Bocadillo', <Ico><path d="M10 3A7 7 0 1 0 12 16L14 19L14 15A7 7 0 0 0 10 3Z" fill="#b4d0ec" stroke="#6a98f0" /><Letter x="7" y="14" size={11} fill="#187018">T</Letter></Ico>],
  ['Segmento', <Ico><path d="M6 14L14 6" /><circle cx="5" cy="15" r="2" /><circle cx="15" cy="5" r="2" /></Ico>],
  ['Nivel verde', <Ico><circle cx="9" cy="10" r="1.5" stroke="#30a830" /><path d="M10 10H19" stroke="#30a830" strokeWidth="2" /></Ico>],
  ['Nivel rojo', <Ico><circle cx="9" cy="10" r="1.5" stroke="#f01010" /><path d="M10 10H19" stroke="#f01010" strokeWidth="2" /></Ico>],
  ['Regla', <Ico><path d="M2 14L14 3L18 7L6 18Z" fill="#a8bcc4" stroke="#56707c" /><path d="M6 11L8 13M9 8L11 10M12 5L14 7" stroke="#56707c" /></Ico>],
  ['Canal', <Ico><path d="M2 3H18V10H2Z" fill="#50a080" stroke="none" fillOpacity="0.5" /><path d="M2 10H18V17H2Z" fill="#b07080" stroke="none" fillOpacity="0.5" /><path d="M2 3H18" stroke="#20a020" strokeDasharray="1 1" /><path d="M2 17H18" stroke="#d04040" strokeDasharray="1 1" /><path d="M2 13L6 6L10 15L17 4M13 5L17 4L18 8" stroke="#a0c0f8" strokeWidth="1.5" /></Ico>],
  ['Elipse roja', <Ellipse color="#e82020" />],
  ['Elipse marrón', <Ellipse color="#80582c" />],
  ['Elipse verde', <Ellipse color="#108030" />],
  ['Elipse lima', <Ellipse color="#20e840" />],
  ['Línea negra', <Slash color="#222" width={1} />],
  ['Línea verde', <Slash color="#30a830" width={2} />],
  ['Línea roja', <Slash color="#f01818" width={2} />],
  ['Horizontal negra', <Flat color="#111" width={1} />],
  ['Horizontal salmón', <Flat color="#f89080" />],
  ['Horizontal lima', <Flat color="#10f010" />],
  ['Horizontal verde', <Flat color="#108020" />],
  ['Horizontal roja', <Flat color="#f01818" />],
  ['Horizontal azul', <Flat color="#6a9cf8" />],
  ['Horizontal marino', <Flat color="#0000a0" />],
  ['Vertical', <Ico><path d="M10 1V19" /></Ico>],
  ['Ángulo', <Ico><path d="M18 15H2L14 4" stroke="#e04040" /><path d="M11 14Q11 9 8 9" stroke="#1010e0" strokeWidth="2" /><Letter x="13" y="11" size={9}>α</Letter></Ico>],
  ['Ciclo', <Ico><circle cx="9" cy="11" r="6" stroke="#f07030" /><path d={plus(9, 11) + plus(15, 6)} stroke="#1010e0" /></Ico>],
  ['Ondas', <Ico><Letter x="1" y="12" size={6}>1</Letter><Letter x="5" y="8" size={6}>3+</Letter><Letter x="13" y="6" size={6}>5+</Letter><Letter x="12" y="14" size={6}>+4</Letter><Letter x="4" y="19" size={6}>+2</Letter><path d="M4 12L7 8M10 14L15 6" stroke="#6a98f0" /></Ico>],
  ['Ondas ABC', <Ico><Letter x="1" y="15" size={7}>a</Letter><Letter x="10" y="7" size={7}>+b</Letter><Letter x="10" y="19" size={7}>c+</Letter><path d="M5 12L10 6M4 4L14 15" stroke="#6a98f0" /></Ico>],
  ['Aceptar', <Ico><path d="M2 11L6 8L9 12Q12 6 18 2L19 5Q13 10 10 17Z" fill="#48c848" stroke="#208020" /></Ico>],
  ['Me gusta', <ThumbsUp size={17} color="#208020" fill="#58d058" />],
  ['Borrar', <Ico><path d="M4 4L16 16M16 4L4 16" stroke="#e81818" strokeWidth="5" /></Ico>],
  ['Aviso', <Ico><path d="M10 2L18 17H2Z" fill="#f8b030" stroke="#b87808" /><path d="M10 7V12M10 14V16" strokeWidth="2" stroke="#402800" /></Ico>],
]

function ToolStrip() {
  return (
    <aside className="flex w-[28px] shrink-0 flex-col items-stretch border-l border-r-2 border-l-[#3c5560] border-r-[#6f8791] bg-[#9dbac6]">
      <button type="button" aria-label="Subir" className="flex h-[12px] shrink-0 items-center justify-center text-[#6a848f]"><ChevronUp size={10} /></button>
      <button type="button" aria-label="Cursor" className="mx-[2px] flex h-[22px] shrink-0 items-center justify-center rounded-sm border border-[#6a848f] bg-[#8ba3ae]">
        <Ico><path d="M7 4L14 11H11L13 16L11 17L9 12L7 14Z" fill="#fff" stroke="#666" /></Ico>
      </button>
      {TOOLS.map(([name, icon]) => (
        <button key={name} type="button" aria-label={name} className="flex h-[22px] shrink-0 items-center justify-center">{icon}</button>
      ))}
      <div className="grow" />
      <button type="button" aria-label="Más herramientas" className="flex h-[12px] shrink-0 items-center justify-center border-y border-[#52707c] bg-[#b0d0dc]"><ChevronDown size={9} strokeWidth={3} /></button>
      <button type="button" aria-label="Gestionar objetos" className="flex h-[30px] shrink-0 items-center justify-center">
        <Ico><rect x="5" y="3" width="10" height="13" fill="#f0f0f0" stroke="#888" /><circle cx="5" cy="5" r="4" fill="#109010" stroke="none" /><Letter x="3" y="8" size={7} fill="#fff">4</Letter><path d="M10 10L17 16M14 9L12 12L15 13L18 11" strokeWidth="2" stroke="#333" /></Ico>
      </button>
      <button type="button" aria-label="Opciones" className="flex h-[23px] shrink-0 items-center justify-center"><Ico><path d="M3 8H6M9 8H12M15 8H18" strokeWidth="3" /><path d="M13 13H18L15 16Z" fill="#111" stroke="none" /></Ico></button>
    </aside>
  )
}

// ---------- bottom bar ----------

const BarButton = ({ label, children, className = 'w-[21px]' }) => (
  <button type="button" aria-label={label} className={`flex h-full shrink-0 items-center justify-center ${className}`}>{children}</button>
)

function BottomBar() {
  return (
    <footer className="flex h-[21px] shrink-0 items-center bg-[#9dbac6]">
      <div className="flex h-full w-[28px] shrink-0 items-center justify-center border-r-2 border-t border-[#6f8791] bg-[#8ba3ae]">
        <Ico><path d="M3 4L7 16L12 5L16 16" stroke="#206020" /><path d="M2 8L6 12L10 8" stroke="#d02020" /><path d="M8 17L16 5L18 7L10 17Z" fill="#f8c020" stroke="#806000" /></Ico>
      </div>
      <BarButton label="Compartir"><Share2 size={13} color="#fff" fill="#fff" strokeWidth={2.5} /></BarButton>
      <BarButton label="Comentarios"><Ico><rect x="2" y="4" width="11" height="8" rx="2" fill="#a8c8f0" stroke="#6088c0" /><rect x="6" y="8" width="12" height="8" rx="2" fill="#3070d0" stroke="#2050a0" /><path d="M9 12H15" stroke="#fff" strokeDasharray="2 1" /></Ico></BarButton>
      <BarButton label="Notas"><Ico><rect x="4" y="4" width="11" height="13" fill="#fff" stroke="#444" /><path d="M6 7H13M6 10H10" stroke="#888" /><path d="M10 11L15 17M15 11L11 16" stroke="#d02020" strokeWidth="1.5" /><path d="M5 14L7 16" stroke="#109010" strokeWidth="2" /></Ico></BarButton>
      <BarButton label="Órdenes"><Ico><path d="M4 5H10M4 10H10M4 15H10" stroke="#109030" strokeWidth="3" /><path d="M10 5H16M10 10H18M10 15H14" stroke="#d03030" strokeWidth="3" /><path d="M10 3V18" /></Ico></BarButton>
      <BarButton label="Ventanas"><Ico><rect x="2" y="3" width="11" height="9" fill="#fff" stroke="#2060b0" strokeWidth="1.5" /><rect x="7" y="8" width="11" height="9" fill="#fff" stroke="#2060b0" strokeWidth="1.5" /><path d="M9 14L12 11L14 14L16 11" stroke="#109010" /></Ico></BarButton>
      <span className="w-[14px] text-center text-[14px] leading-none text-[#41606d]">«</span>
      <button type="button" aria-label="Desplazar a la izquierda" className="flex h-[13px] w-[13px] shrink-0 items-center justify-center border border-[#6f8791] bg-[#b4d2de]"><ChevronLeft size={8} strokeWidth={4} /></button>
      <div className="flex h-[13px] grow border-y border-[#6f8791] bg-[#9dbac6]">
        <div className="flex-[1499]" />
        <div className="flex-[57] border-x border-[#6f8791] bg-gradient-to-b from-[#bfe0ec] to-[#a4c2ce]" />
        <div className="flex-[36]" />
      </div>
      <button type="button" aria-label="Desplazar a la derecha" className="flex h-[13px] w-[13px] shrink-0 items-center justify-center border border-[#6f8791] bg-[#b4d2de]"><ChevronRight size={8} strokeWidth={4} /></button>
      <div className="flex w-[151px] shrink-0 items-center pl-[3px]">
        <BarButton label="Deshacer" className="w-[22px]"><Undo2 size={14} strokeWidth={3} color="#1060d0" /></BarButton>
        <BarButton label="Rehacer" className="w-[22px]"><Redo2 size={14} strokeWidth={3} color="#7098c8" /></BarButton>
        <BarButton label="Ajustes" className="w-[22px]"><Ico><rect x="12" y="3" width="4" height="11" fill="#40c040" stroke="#108010" /><path d="M4 17L11 10M9 6Q9 11 14 10" strokeWidth="4" stroke="#222" /><path d="M4 17L11 10M9 6Q9 11 14 10" strokeWidth="2" stroke="#eee" /><path d="M4 8V13" stroke="#d02020" strokeWidth="2" /></Ico></BarButton>
        <BarButton label="Autoescala" className="w-[21px]"><span className="flex items-center border-b-2 border-r-2 border-dotted border-[#1010e0]"><Search size={13} strokeWidth={2.5} /></span></BarButton>
        <BarButton label="Alejar" className="w-[22px]"><ZoomOut size={15} strokeWidth={2.5} fill="#e4f0f4" /></BarButton>
        <BarButton label="Acercar" className="w-[22px]"><ZoomIn size={15} strokeWidth={2.5} fill="#e4f0f4" /></BarButton>
        <BarButton label="Escala" className="w-[17px]"><Ico><path d="M4 6H18" strokeWidth="4" strokeDasharray="2 1" /><path d="M11 9V16M8 13L11 16L14 13" stroke="#1060d0" strokeWidth="2" /></Ico></BarButton>
      </div>
    </footer>
  )
}

const HalfBox = ({ flip }) => (
  <span className="flex h-[9px] w-[9px] shrink-0">
    <i className={`w-1/2 ${flip ? 'bg-black' : 'bg-[#6f8791]'}`} />
    <i className={`w-1/2 ${flip ? 'bg-[#6f8791]' : 'bg-black'}`} />
  </span>
)

export default function App() {
  return (
    <div className="flex h-screen w-full flex-col overflow-hidden bg-[#9dbac6] font-['Liberation_Sans',Arial,sans-serif] text-[#111]">
      <TopBar />
      <div className="flex min-h-0 flex-1 overflow-hidden">
        <ToolStrip />
        <main className="min-w-0 flex-1 bg-white">
          <section className="relative">
            <PriceChart />
            <Legend />
          </section>
          <section className="relative">
            <TrainChart />
            <PanelTitle swatch={<HalfBox />}>Sistema de trenes Doc v4 (f f)</PanelTitle>
          </section>
          <section className="relative">
            <WillyChart />
            <PanelTitle swatch={<Box className="bg-[#6f8791]" />}>Willy Doc (t)</PanelTitle>
          </section>
          <section className="relative">
            <AwesomeChart />
            <PanelTitle swatch={<Box className="bg-[#6f8791]" />}>Awesome Evolution Doc</PanelTitle>
          </section>
          <section className="relative">
            <ForceChart />
            <PanelTitle swatch={<HalfBox flip />}>Barra Fuerza Fondo Mercado v4 (f)</PanelTitle>
          </section>
          <TimeAxis />
        </main>
      </div>
      <BottomBar />
    </div>
  )
}
